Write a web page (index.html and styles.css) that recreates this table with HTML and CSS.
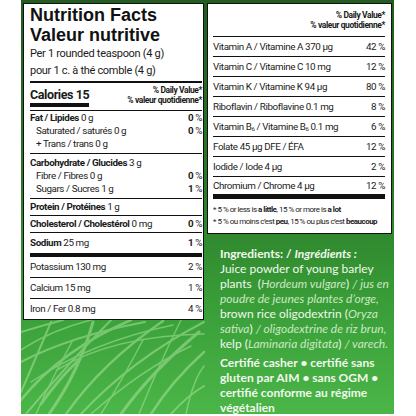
FILE: index.html
```html
<!DOCTYPE html>
<html lang="en">

<head>
    <meta charset="UTF-8">
    <title>Nutrition Facts - Valeur nutritive</title>
    <link rel="stylesheet" href="styles.css">
</head>

<body>
    <div class="label">
        <!-- grass texture behind the tables -->
        <svg class="grass" width="373" height="414" viewBox="0 0 373 414">
            <g fill="none" stroke="#a6e39a" stroke-linecap="round" opacity="0.55">
                <path d="M0 400 Q40 350 110 320" stroke-width="2.5" />
                <path d="M5 414 Q50 360 92 318" stroke-width="2" />
                <path d="M28 414 Q58 372 72 322" stroke-width="3" />
                <path d="M60 414 Q110 360 183 322" stroke-width="2" />
                <path d="M100 414 Q130 372 178 332" stroke-width="3" />
                <path d="M0 362 Q50 336 124 322" stroke-width="2" />
                <path d="M10 382 Q70 342 152 325" stroke-width="1.5" />
                <path d="M130 414 Q150 382 183 352" stroke-width="2.5" />
                <path d="M0 332 Q20 326 42 320" stroke-width="2" />
                <path d="M45 414 Q82 362 142 321" stroke-width="2.5" />
                <path d="M150 414 Q166 396 183 386" stroke-width="2" />
                <path d="M80 414 Q100 382 122 340" stroke-width="1.5" />
                <path d="M0 392 Q14 360 30 322" stroke-width="2" />
                <path d="M118 414 Q140 360 160 320" stroke-width="1.5" />
                <path d="M15 414 Q30 380 52 340" stroke-width="1.5" />
                <path d="M0 350 Q30 330 70 320" stroke-width="1.5" />
                <path d="M70 414 Q120 370 170 346" stroke-width="1.5" />
                <path d="M165 414 Q172 380 183 366" stroke-width="1.5" />
                <path d="M36 370 Q90 336 183 334" stroke-width="1.5" />
                <path d="M20 404 Q40 376 58 360" stroke-width="3" />
            </g>
        </svg>

        <section class="table table-main">
            <h1 class="title">Nutrition Facts<br>Valeur nutritive</h1>
            <p class="serving">Per 1 rounded teaspoon (4 g)<br>pour 1 c. à thé comble (4 g)</p>

            <div class="calories">
                <span class="cal">Calories 15</span>
                <span class="dv">% Daily Value*<br>% valeur quotidienne*</span>
            </div>

            <div class="group g-fat">
                <div class="row"><span><b>Fat / Lipides</b> 0 g</span><span><b>0</b> %</span></div>
                <div class="row sub"><span>Saturated / saturés 0 g</span><span><b>0</b> %</span></div>
                <div class="row sub"><span>+ Trans / trans 0 g</span></div>
            </div>
            <div class="group g-carb">
                <div class="row"><span><b>Carbohydrate / Glucides</b> 3 g</span></div>
                <div class="row sub"><span>Fibre / Fibres 0 g</span><span><b>0</b> %</span></div>
                <div class="row sub"><span>Sugars / Sucres 1 g</span><span><b>1</b> %</span></div>
            </div>
            <div class="group single">
                <div class="row"><span><b>Protein / Protéines</b> 1 g</span></div>
            </div>
            <div class="group single">
                <div class="row"><span><b>Cholesterol / Cholestérol</b> 0 mg</span><span><b>0</b> %</span></div>
            </div>
            <div class="group single tall">
                <div class="row"><span><b>Sodium</b> 25 mg</span><span><b>1</b> %</span></div>
            </div>
            <div class="group single tall thick">
                <div class="row"><span>Potassium 130 mg</span><span>2 %</span></div>
            </div>
            <div class="group single tall">
                <div class="row"><span>Calcium 15 mg</span><span>1 %</span></div>
            </div>
            <div class="group single tall">
                <div class="row"><span>Iron / Fer 0.8 mg</span><span>4 %</span></div>
            </div>
        </section>

        <div class="column">
            <section class="table table-vit">
                <div class="dv dv-vit">% Daily Value*<br>% valeur quotidienne*</div>
                <div class="vit"><span>Vitamin A / Vitamine A 370 µg</span><span>42 %</span></div>
                <div class="vit"><span>Vitamin C / Vitamine C 10 mg</span><span>12 %</span></div>
                <div class="vit"><span>Vitamin K / Vitamine K 94 µg</span><span>80 %</span></div>
                <div class="vit"><span>Riboflavin / Riboflavine 0.1 mg</span><span>8 %</span></div>
                <div class="vit"><span>Vitamin B<sub>6</sub> / Vitamine B<sub>6</sub> 0.1 mg</span><span>6 %</span></div>
                <div class="vit"><span>Folate 45 µg DFE / ÉFA</span><span>12 %</span></div>
                <div class="vit"><span>Iodide / Iode 4 µg</span><span>2 %</span></div>
                <div class="vit last"><span>Chromium / Chrome 4 µg</span><span>12 %</span></div>
                <p class="notes">* 5 % or less is <b>a little</b>, 15 % or more is <b>a lot</b><br>* 5 % ou moins c’est <b>peu</b>, 15 % ou plus c’est <b>beaucoup</b></p>
            </section>

            <div class="ingredients">
                <p><b>Ingredients: / <i>Ingrédients :</i></b><br>
                    Juice powder of young barley<br>
                    plants&nbsp; (<i>Hordeum vulgare</i>) <i>/ jus en<br>
                    poudre de jeunes plantes d’orge,</i><br>
                    brown rice oligodextrin (<i>Oryza<br>
                    sativa</i>) <i>/ oligodextrine de riz brun,</i><br>
                    kelp (<i>Laminaria digitata</i>) <i>/ varech.</i></p>
                <p class="cert">Certifié casher • certifié sans<br>
                    gluten par AIM • sans OGM •<br>
                    certifié conforme au régime<br>
                    végétalien</p>
            </div>
        </div>
    </div>
</body>

</html>
```

FILE: styles.css
```css
body {
    margin: 0;
    background-color: #ffffff;
}

.label {
    position: relative;
    margin-left: 21px;
    width: 373px;
    height: 414px;
    box-sizing: border-box;
    padding: 3px 2px 0;
    display: flex;
    gap: 3px;
    align-items: flex-start;
    overflow: hidden;
    background: linear-gradient(180deg, #235b21 0%, #2a7a29 45%, #389c37 72%, #4bb648 100%);
}

.grass {
    position: absolute;
    left: 0;
    top: 0;
}

.table {
    position: relative;
    box-sizing: border-box;
    background-color: #ffffff;
    border: 1px solid #111;
    color: #1b1b1b;
    font-family: Roboto, "Liberation Sans", sans-serif;
    letter-spacing: -0.4px;
}

.table-main {
    width: 181px;
    padding: 0 1px 0 6px;
}

.title {
    margin: 0;
    padding-top: 1px;
    font-family: "Liberation Sans", sans-serif;
    font-size: 18px;
    line-height: 20px;
    font-weight: 700;
    letter-spacing: 0;
    color: #111;
}

.serving {
    margin: 0 0 2px;
    font-size: 11px;
    line-height: 17px;
    letter-spacing: -0.3px;
}

.calories {
    display: flex;
    justify-content: space-between;
    align-items: flex-start;
    border-top: 2px solid #111;
    padding-bottom: 3px;
}

.cal {
    padding-top: 3px;
    font-size: 12.5px;
    line-height: 17px;
    font-weight: 700;
    border-bottom: 4px solid #111;
}

.dv {
    padding-top: 2px;
    font-size: 8.5px;
    line-height: 10px;
    font-weight: 700;
    text-align: right;
}

.group {
    border-top: 1px solid #111;
}

.g-fat {
    padding-bottom: 3px;
}

.g-carb {
    padding: 2px 0 3px;
}

.row {
    display: flex;
    justify-content: space-between;
    font-size: 9.8px;
    line-height: 13px;
}

.row.sub {
    padding-left: 6px;
}

.single .row {
    line-height: 16px;
}

.tall {
    padding: 2px 0;
}

.thick {
    border-top-width: 4px;
}

.table-vit {
    width: 185px;
    padding: 0 6px 0 5px;
}

.dv-vit {
    padding: 6px 0;
}

.vit {
    display: flex;
    justify-content: space-between;
    border-top: 1px solid #111;
    padding-top: 1px;
    font-size: 9.8px;
    line-height: 18px;
}

.vit.last {
    line-height: 16px;
    border-bottom: 5px solid #111;
}

.vit sub {
    font-size: 6px;
    vertical-align: -1px;
    line-height: 0;
}

.notes {
    margin: 0;
    padding: 5px 0;
    font-size: 8px;
    line-height: 12px;
    letter-spacing: -0.5px;
    white-space: nowrap;
}

.ingredients {
    position: relative;
    padding: 12px 0 0 13px;
    font-family: Lato, "Open Sans", sans-serif;
    font-size: 12px;
    line-height: 15px;
    color: #f1f8ed;
}

.ingredients p {
    margin: 0 0 4px;
}

.ingredients i {
    color: #cbe8c2;
}

.ingredients b i {
    color: #f1f8ed;
}

.cert {
    font-weight: 700;
}
```
